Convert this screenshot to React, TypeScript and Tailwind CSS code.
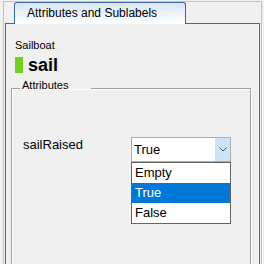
const options = ["Empty", "True", "False"];

export default function App() {
  const selected = "True";
  return (
    <div className="w-[264px] h-[264px] overflow-hidden bg-[#f0f0f0] pl-[3px] pt-[1px] font-['Liberation_Sans',Arial,sans-serif] text-black">
      <div className="w-[259px] h-[300px] border-l border-t border-r border-[#c3c3c3] px-[1px]">
        <div className="flex pl-[9px]">
          <div className="relative z-10 -mb-px w-[172px] h-[22px] rounded-t-[3px] border border-b-0 border-[#3b6aa8] bg-gradient-to-b from-[#d9e6f4] to-white pl-[12px] pt-[3px] text-[12px] leading-[14px]">
            Attributes and Sublabels
          </div>
        </div>
        <div className="h-[280px] border border-b-0 border-[#3b6aa8]">
          <div className="pl-[9px] pt-[15px]">
            <div className="text-[11px] leading-[13px]">Sailboat</div>
            <div className="mt-[5px] flex h-[16px] items-center gap-[5px]">
              <span className="h-[16px] w-[8px] bg-[#6fd11a]" />
              <span className="text-[18px] font-bold leading-[16px]">sail</span>
            </div>
          </div>
          <fieldset className="mt-[6px] ml-[5px] h-[200px] w-[240px] border border-[#a0a0a0] px-[8px] shadow-[inset_1px_1px_0_#fff,1px_1px_0_#fff]">
            <legend className="h-[19px] w-[71px] pl-[2px] text-[11px] leading-[13px]">Attributes</legend>
            <div className="mt-[39px] flex items-start">
              <div className="w-[111px] pl-[3px] text-[13px] leading-[15px]">sailRaised</div>
              <div className="w-[100px]">
                <div className="flex h-[25px] items-stretch border border-[#adadad] bg-white">
                  <div className="flex flex-1 items-center pl-[2px] text-[13px] leading-[15px]">{selected}</div>
                  <div className="flex w-[15px] items-center justify-center bg-[#cce4f7]">
                    <svg width="8" height="5" viewBox="0 0 8 5">
                      <path d="M0.5 0.5 L4 4 L7.5 0.5" fill="none" stroke="#555" strokeWidth="1" />
                    </svg>
                  </div>
                </div>
                <div className="border border-[#646464] bg-white">
                  {options.map((o) => (
                    <div
                      key={o}
                      className={
                        o === selected
                          ? "h-[20px] bg-[#0078d7] pl-[3px] text-[13px] leading-[20px] text-white"
                          : "h-[20px] pl-[3px] text-[13px] leading-[20px]"
                      }
                    >
                      {o}
                    </div>
                  ))}
                </div>
              </div>
            </div>
          </fieldset>
        </div>
      </div>
    </div>
  );
}
